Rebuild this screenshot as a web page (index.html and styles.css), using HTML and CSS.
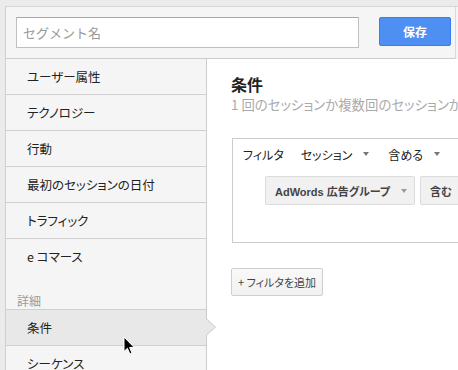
FILE: index.html
```html
<!DOCTYPE html>
<html lang="ja">

<head>
    <meta charset="UTF-8">
    <meta name="viewport" content="width=device-width, initial-scale=1.0">
    <title>セグメント</title>
    <link rel="stylesheet" href="styles.css">
</head>

<body>
    <div class="page">
        <!-- 上のバー -->
        <div class="header">
            <input class="seg-name" type="text" placeholder="セグメント名">
            <button class="save">保存</button>
        </div>

        <div class="body">
            <!-- 左のメニュー -->
            <ul class="side">
                <li class="item">ユーザー属性</li>
                <li class="item">テクノロジー</li>
                <li class="item">行動</li>
                <li class="item">最初のセッションの日付</li>
                <li class="item">トラフィック</li>
                <li class="item no-line">e コマース</li>
                <li class="label">詳細</li>
                <li class="item active">条件</li>
                <li class="item">シーケンス</li>
            </ul>

            <div class="main">
                <h2 class="title">条件</h2>
                <p class="sub">1 回のセッションか複数回のセッションかを指定してセグメントを作成します。</p>

                <div class="filter-box">
                    <div class="filter-row">
                        <span class="f-label">フィルタ</span>
                        <span class="drop drop-session">セッション<i class="caret"></i></span>
                        <span class="drop">含める<i class="caret"></i></span>
                    </div>
                    <div class="cond-row">
                        <button class="sel sel-dim">AdWords 広告グループ<i class="caret"></i></button>
                        <button class="sel sel-op">含む<i class="caret"></i></button>
                    </div>
                </div>

                <button class="add">+ フィルタを追加</button>
            </div>
        </div>

        <!-- マウスカーソル -->
        <svg class="cursor" width="13" height="20" viewBox="0 0 13 20">
            <path d="M1 1 L1 15.5 L4.4 12.3 L6.9 18 L9 17.1 L6.6 11.5 L11.2 11.5 Z" fill="#000" stroke="#fff"
                stroke-width="1" stroke-linejoin="round" />
        </svg>
    </div>
</body>

</html>
```

FILE: styles.css
```css
      * {
          box-sizing: border-box;
      }

      body {
          margin: 0;
          background: #ebebeb;
          font-family: "Noto Sans CJK JP", "Liberation Sans", sans-serif;
          font-feature-settings: "palt";
          color: #222;
          overflow: hidden;
      }

      .page {
          position: relative;
          margin: 6px 0 0 5px;
          height: 364px;
          border-left: 1px solid #cfcfcf;
          border-top: 1px solid #d6d6d6;
          background: #f5f5f5;
      }

      .header {
          display: flex;
          align-items: flex-start;
          height: 52px;
          margin-right: 2px;
          padding: 10px 0 0 10px;
          border-right: 1px solid #dadada;
          border-bottom: 1px solid #cccccc;
      }

      .seg-name {
          width: 343px;
          height: 31px;
          margin: 0;
          padding: 0 6px;
          border: 1px solid #c0c0c0;
          border-top-color: #a8a8a8;
          font-family: inherit;
          font-size: 13px;
          color: #333;
          background: #fff;
          outline: none;
      }

      .seg-name::placeholder {
          color: #999;
      }

      .save {
          width: 72px;
          height: 29px;
          margin-left: 20px;
          border: 1px solid #3b7de8;
          border-radius: 2px;
          background: #4d8ff2;
          color: #fff;
          font-family: inherit;
          font-size: 12px;
          font-weight: bold;
          padding: 0;
      }

      .body {
          display: flex;
          height: 311px;
      }

      .side {
          width: 201px;
          margin: 0;
          padding: 0;
          list-style: none;
          border-right: 1px solid #cccccc;
          background: #f5f5f5;
          font-size: 12.5px;
      }

      .item {
          position: relative;
          height: 36px;
          line-height: 35px;
          padding-left: 21px;
          border-bottom: 1px solid #d0d0d0;
          color: #222;
      }

      .item.no-line {
          border-bottom: none;
          height: 35px;
      }

      .label {
          height: 36px;
          padding: 20px 0 0 11px;
          border-bottom: 1px solid #d0d0d0;
          font-size: 12px;
          line-height: 14px;
          color: #999;
      }

      .item.active {
          background: #e8e8e8;
      }

      /* 右向きの矢印 */
      .item.active::before,
      .item.active::after {
          content: "";
          position: absolute;
          left: 100%;
          width: 0;
          height: 0;
          z-index: 2;
      }

      .item.active::before {
          top: 8px;
          border-left: 10px solid #c6c6c6;
          border-top: 9px solid transparent;
          border-bottom: 9px solid transparent;
      }

      .item.active::after {
          top: 9px;
          border-left: 9px solid #e8e8e8;
          border-top: 8px solid transparent;
          border-bottom: 8px solid transparent;
      }

      .main {
          flex: 1;
          min-width: 0;
          overflow: hidden;
          background: #fff;
          padding: 15px 0 0 24px;
          white-space: nowrap;
      }

      .title {
          margin: 0;
          font-size: 16px;
          font-weight: bold;
          line-height: 20px;
          color: #222;
      }

      .sub {
          margin: 1px 0 0;
          font-size: 13.4px;
          line-height: 18px;
          color: #aaaaaa;
      }

      .filter-box {
          width: 420px;
          height: 105px;
          margin: 25px 0 0 1px;
          border: 1px solid #cccccc;
          padding-left: 10px;
      }

      .filter-row {
          display: flex;
          align-items: center;
          height: 30px;
          font-size: 12px;
          color: #222;
      }

      .f-label {
          margin-right: 17px;
      }

      .drop {
          display: flex;
          align-items: center;
      }

      .drop-session {
          margin-right: 19px;
      }

      .caret {
          display: inline-block;
          width: 0;
          height: 0;
          margin-left: 11px;
          border-left: 3px solid transparent;
          border-right: 3px solid transparent;
          border-top: 4px solid #777;
      }

      .cond-row {
          display: flex;
          gap: 5px;
          margin: 7px 0 0 22px;
      }

      .sel {
          display: flex;
          align-items: center;
          justify-content: space-between;
          height: 29px;
          padding: 0 10px 0 9px;
          border: 1px solid #dcdcdc;
          border-radius: 2px;
          background: #f1f1f1;
          font-family: "Liberation Sans", "Noto Sans CJK JP", sans-serif;
          font-feature-settings: "palt";
          font-size: 11px;
          font-weight: bold;
          color: #444;
      }

      .sel-dim {
          width: 150px;
      }

      .sel-op {
          width: 100px;
      }

      .sel .caret {
          border-top-color: #999;
      }

      .add {
          display: block;
          height: 28px;
          margin-top: 25px;
          padding: 0 6px;
          border: 1px solid #cfcfcf;
          border-radius: 2px;
          background: linear-gradient(#f9f9f9, #f1f1f1);
          font-family: inherit;
          font-feature-settings: "palt";
          font-size: 11px;
          color: #444;
      }

      .cursor {
          position: absolute;
          left: 117px;
          top: 329px;
      }
```
